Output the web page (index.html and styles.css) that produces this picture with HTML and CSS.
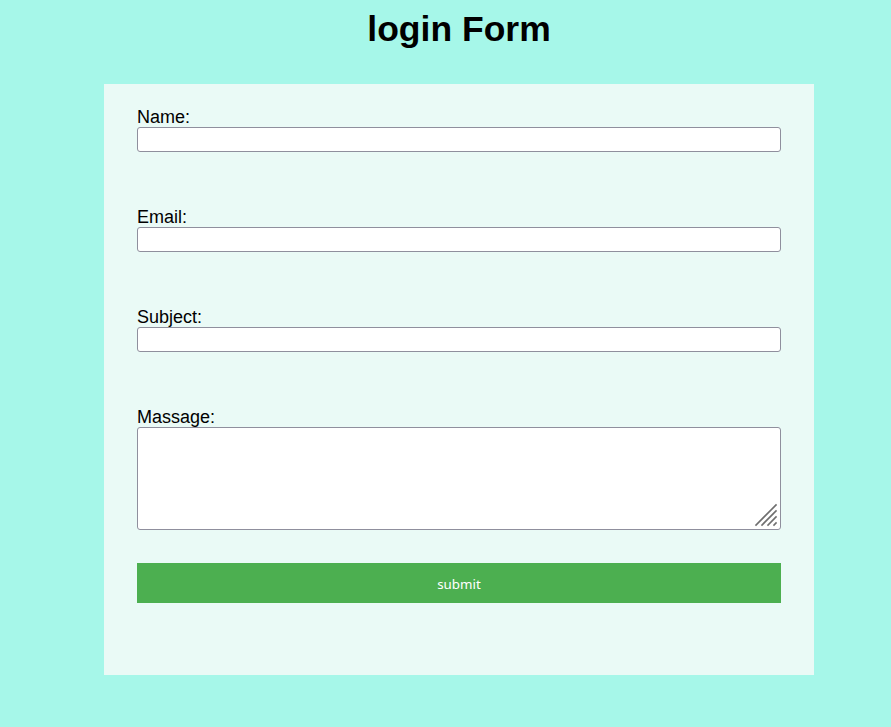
FILE: index.html
```html
<!DOCTYPE html>
<html lang="en">
<head>
<meta charset="utf-8">
<title>login Form</title>
<link rel="stylesheet" href="styles.css">
</head>
<body>
<div class="page">
  <h1 class="title">login Form</h1>
  <form class="card">
    <div class="field">
      <label class="label" for="name">Name:</label>
      <input class="input" id="name" type="text">
    </div>
    <div class="field">
      <label class="label" for="email">Email:</label>
      <input class="input" id="email" type="text">
    </div>
    <div class="field">
      <label class="label" for="subject">Subject:</label>
      <input class="input" id="subject" type="text">
    </div>
    <div class="field field-last">
      <label class="label" for="msg">Massage:</label>
      <div class="textarea-wrap">
        <textarea class="textarea" id="msg"></textarea>
        <svg class="grip" width="24" height="24" viewBox="0 0 24 24" aria-hidden="true">
          <g stroke="#6f6f6f" stroke-width="1.6" stroke-linecap="square">
            <line x1="2" y1="22" x2="22" y2="2"/>
            <line x1="8" y1="22" x2="22" y2="8"/>
            <line x1="14" y1="22" x2="22" y2="14"/>
            <line x1="20" y1="22" x2="22" y2="20"/>
          </g>
        </svg>
      </div>
    </div>
    <button class="submit" type="button">submit</button>
  </form>
</div>
</body>
</html>
```
FILE: styles.css
```css
html, body {
  margin: 0;
  padding: 0;
}
body {
  background: #a6f7e9;
  font-family: "Liberation Sans", Arial, sans-serif;
  color: #000;
}
.page {
  width: 710px;
  margin-left: 104px;
  padding-top: 8px;
}
.title {
  margin: 0 0 34px;
  text-align: center;
  font-size: 35.5px;
  line-height: 42px;
  font-weight: bold;
}
.card {
  background: #eafaf6;
  padding: 22px 33px 72px;
  display: flex;
  flex-direction: column;
}
.field {
  display: flex;
  flex-direction: column;
  margin-bottom: 54px;
}
.field-last {
  margin-bottom: 33px;
}
.label {
  font-size: 18px;
  line-height: 23px;
  margin-bottom: -2px;
}
.input {
  box-sizing: border-box;
  height: 25px;
  width: 100%;
  margin: 0;
  border: 1px solid #8f8f9d;
  border-radius: 3px;
  background: #fff;
  padding: 2px 4px;
}
.textarea-wrap {
  position: relative;
  height: 103px;
}
.textarea {
  display: block;
  box-sizing: border-box;
  height: 103px;
  width: 100%;
  margin: 0;
  border: 1px solid #8f8f9d;
  border-radius: 3px;
  background: #fff;
  padding: 2px;
  resize: none;
}
.grip {
  position: absolute;
  right: 3px;
  bottom: 3px;
  pointer-events: none;
}
.submit {
  height: 40px;
  border: none;
  background: #4caf50;
  color: #fff;
  font-family: "Noto Sans", "Open Sans", sans-serif;
  font-size: 13.333px;
  margin: 0;
  padding: 2px 0 0;
}
```
